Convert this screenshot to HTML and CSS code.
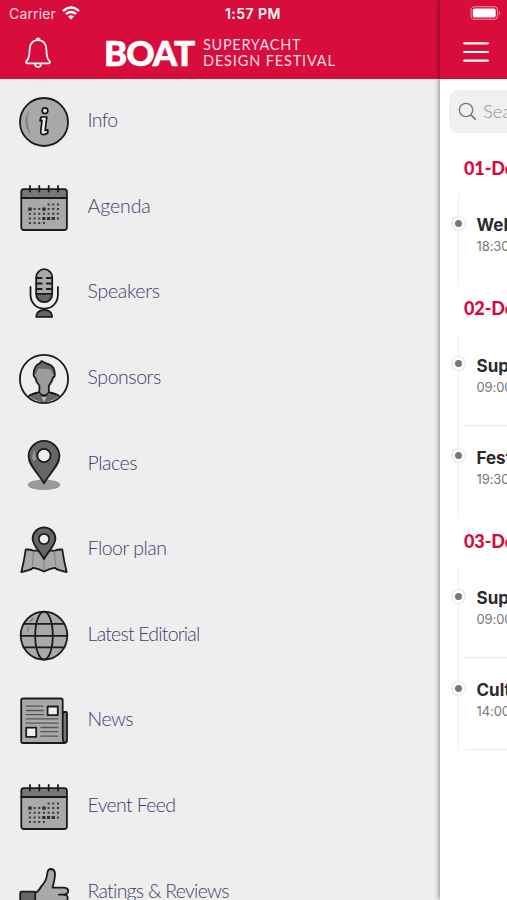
FILE: index.html
```html
<!DOCTYPE html>
<html lang="en">
<head>
<meta charset="utf-8">
<title>BOAT Superyacht Design Festival</title>
<link rel="stylesheet" href="styles.css">
</head>
<body>
<svg class="defs" width="0" height="0">
  <symbol id="calendar" viewBox="0 0 50 50">
    <rect x="2.3" y="6.2" width="45.6" height="40.8" rx="2.5" fill="#a9a9a9"/>
    <path d="M2.3 14.8V8.5q0-2.3 2.3-2.3h41q2.3 0 2.3 2.3v6.3z" fill="#777"/>
    <rect class="ink" x="2.3" y="6.2" width="45.6" height="40.8" rx="2.5"/>
    <path class="ink" d="M2.3 15H48M11 3v5.5M20.3 3v5.5M29.7 3v5.5M39 3v5.5"/>
    <g class="dots"><path d="M28.6 21.4H40.2M9.9 26.1H40.2M9.9 30.8H40.2M9.9 35.4H40.2M9.9 40.1H26.2"/></g>
    <path d="M9.3 24.4h3.4v3.4H9.3zM23.3 24.4h3.4v3.4h-3.4zM23.3 33.9h3.2v3.2h-3.2zM28 33.9h3.2v3.2H28zM32.7 33.9h3.2v3.2h-3.2z" fill="#303030"/>
  </symbol>
</svg>
<div class="app">
  <aside class="drawer">
    <header class="bar">
      <div class="status">
        <span class="carrier">Carrier</span>
        <svg class="wifi" width="18" height="14" viewBox="0 0 18 14"><path d="M1 5.1Q9-2.2 17 5.1M3.9 8.1q5.1-4.3 10.2 0" fill="none" stroke="#fff" stroke-width="2.3"/><path d="M6 10.4q3-2.3 6 0L9 13.6z" fill="#fff"/></svg>
        <span class="clock">1:57 PM</span>
      </div>
      <div class="brand">
        <svg class="bell" width="28" height="32" viewBox="0 0 28 32"><path d="M14 3.2c-5.6 0-8.400 4-8.400 9.300 0 6.600-.8 9.600-3 11.500-1.100 1-.6 2.300.7 2.300h21.400c1.300 0 1.800-1.300.7-2.300-2.200-1.900-3-4.900-3-11.500 0-5.300-2.800-9.300-8.400-9.300zM12.200 3.200c0-2.600 3.600-2.600 3.600 0M11 26.600c0 4.600 6 4.600 6 0" fill="none" stroke="#fff" stroke-width="1.7"/></svg>
        <div class="logo"><span class="logo-name">BOAT</span><span class="logo-tag"><span class="tag-a">SUPERYACHT</span><span class="tag-b">DESIGN FESTIVAL</span></span></div>
      </div>
    </header>
    <nav class="menu">
      <a class="row"><svg class="icon" viewBox="0 0 50 50"><circle class="ink grey" cx="25" cy="25" r="24"/><path d="M10.500 12.500Q6.500 25 12 37.500Q4.500 31 6.600 20Z" fill="#858585"/><circle cx="26" cy="13.700" r="2.800" fill="#eee" stroke="#111" stroke-width="1.700"/><path d="M22 20h5.800l-1.700 13.500 2.600-.8v3.300q-3 2.300-6 1.200-1.300-.8-1-3l1.300-10.800-2 .3z" fill="#eee" stroke="#111" stroke-width="1.700" stroke-linejoin="round"/></svg><span class="w-info">Info</span></a>
      <a class="row"><svg class="icon"><use href="#calendar"/></svg><span class="w-agenda">Agenda</span></a>
      <a class="row"><svg class="icon" viewBox="0 0 50 50"><rect x="17.200" y="1.200" width="16" height="33" rx="8" fill="#a9a9a9"/><path d="M17.200 25.800h16q0 9-8 9t-8-9z" fill="#666"/><rect class="ink" x="17.200" y="1.200" width="16" height="33" rx="8"/><path class="ink" d="M17.200 25.800h16M17.200 10h5.500M17.200 15.500h5.500M17.200 21h5.500M33.200 10h-5.500M33.200 15.500h-5.500M33.200 21h-5.500M11.500 19v7.500c0 18.800 27.400 18.800 27.400 0V19"/><path class="ink dark" d="M17.200 48.800c0-9.300 16-9.300 16 0z"/></svg><span class="w-speakers">Speakers</span></a>
      <a class="row"><svg class="icon" viewBox="0 0 50 50"><path d="M10 42.200q2-2 8.500-3l6.500 3 6.500-3q6.500 1 8.500 3-15 11.500-30 0z" fill="#666"/><path d="M22.500 43h5L25 48z" fill="#bbb"/><path class="ink" d="M10 42q2-2 9.500-3.500M40 42q-2-2-9.500-3.500"/><path d="M20.500 32q-3.500-4-4.300-8.500-2-.8-1.500-4 .2-8 6.300-10.500l1.500-2q4.500 2.300 7.500 3.300 5.500 2 5.800 9.200.3 3.500-1.800 4-1 4.500-4.200 8.500v6.500q-4.800 6-9.600 0z" fill="#9b9b9b"/><path d="M15 20q0-8.500 6-11l1.500-2q4.500 2.300 7.500 3.300 5.500 2 5.500 9.700l-2 .5q0-5-4-5.500l-10-.5q-2 3-2.500 6z" fill="#686868"/><path class="ink" d="M20.500 32q-3.500-4-4.300-8.500-2-.8-1.500-4 .2-8 6.300-10.500l1.500-2q4.500 2.300 7.500 3.300 5.500 2 5.800 9.200.3 3.500-1.800 4-1 4.500-4.200 8.500v6.500q-4.800 6-9.600 0z"/><circle class="ink" cx="25" cy="25" r="24.100"/></svg><span class="w-sponsors">Sponsors</span></a>
      <a class="row"><svg class="icon" viewBox="0 0 50 50"><ellipse cx="25" cy="44.800" rx="16.200" ry="5.200" fill="#999"/><path class="ink dark" d="M25 43.300C19 33 9.600 25 9.600 16.200a15.400 15.400 0 0 1 30.800 0C40.400 25 31 33 25 43.300z"/><path d="M14.500 21q-3-6 1.800-11.500-1 5.500 1 9.500z" fill="#999"/><circle class="ink pale" cx="25" cy="15.500" r="6.600"/></svg><span class="w-places">Places</span></a>
      <a class="row"><svg class="icon" viewBox="0 0 50 50"><path class="ink grey" d="M6.700 24.500q5-.2 7.800 1.300l10.500-1 10.500 1q2.800-1.500 7.800-1.300 1.500 11 4.400 22.500Q39 45.600 35.700 42.800 31 43.500 25 46.500q-6-3-10.700-3.700Q11 45.600 2.300 47 5.200 35.500 6.700 24.500z"/><path d="M14.700 26l-1.500 15M35.300 26l1.500 15M25 33v12" stroke="#777" stroke-width=".8"/><path class="ink dark" d="M25 34C20.800 26 13.600 20.500 13.600 13.800a11.400 11.400 0 0 1 22.800 0C36.400 20.500 29.200 26 25 34z"/><circle class="ink pale" cx="25" cy="14" r="5.200"/></svg><span class="w-floor">Floor plan</span></a>
      <a class="row"><svg class="icon" viewBox="0 0 50 50"><ellipse class="ink grey" cx="25" cy="24.600" rx="23.300" ry="24"/><ellipse class="ink" cx="25" cy="24.600" rx="8.800" ry="24"/><path class="ink" d="M4.700 12.800h40.600M1.700 24.800h46.600M4.500 36.400h41"/><path d="M8.500 21l1-5M11.500 11q1-2.500 3-4" stroke="#777"/></svg><span class="w-editorial">Latest Editorial</span></a>
      <a class="row"><svg class="icon" viewBox="0 0 50 50"><path class="ink mid" d="M43.500 16h3.500q1 0 1 1v27q0 3-3 3h-3z"/><path class="ink grey" d="M4 2.500h38q1.700 0 1.700 1.700V41q0 4 1.500 6H4q-1.800 0-1.800-1.800v-41Q2.200 2.500 4 2.500z"/><path d="M6.700 10.200h18M6.700 14.500h18M6.700 18.600h18M6.700 22.900h32.700M6.700 27.200h32.700M21.400 31.500h18M21.400 35.700h18M21.400 40.100h18" stroke="#555" stroke-width="1.300"/><path class="ink pale" d="M28.600 10.500h10.200v8.700H28.600zM7.200 31.600h10v9.200h-10z"/></svg><span class="w-news">News</span></a>
      <a class="row"><svg class="icon"><use href="#calendar"/></svg><span class="w-feed">Event Feed</span></a>
      <a class="row"><svg class="icon" viewBox="0 0 50 50"><path class="ink grey" d="M16 25q4-2 6.500-7 5-5 5.700-12Q28.500 1 32 1q4.500.5 4 6.500Q35.500 13 33.500 19.700H45q4.500.3 4.200 3.500-.2 3-4.200 3.500 4 .5 3.700 3.800-.4 3.300-4.400 3.300V50H16z"/><path class="ink" d="M40 26.700h6M40 34h5"/><rect class="ink dark" x="1.200" y="23.600" width="15" height="26" rx="1.500"/></svg><span class="w-ratings">Ratings &amp; Reviews</span></a>
    </nav>
  </aside>
  <main class="page">
    <header class="bar page-bar">
      <svg class="battery" width="32" height="14" viewBox="0 0 32 14"><rect x="1" y=".8" width="26.500" height="12.400" rx="3.500" fill="none" stroke="#f08ba4" stroke-width="1.100"/><rect x="2.800" y="2.600" width="22.900" height="8.800" rx="2" fill="#fff"/><path d="M29 4.800q2.200 2.200 0 4.400z" fill="#f08ba4"/></svg>
      <svg class="burger" width="26" height="22" viewBox="0 0 26 22"><path d="M1.200 2.300h23.600M1.200 11h23.600M1.200 19.700h23.600" stroke="#fff" stroke-width="2.200" stroke-linecap="round"/></svg>
    </header>
    <div class="search"><svg width="20" height="20" viewBox="0 0 20 20"><circle cx="8" cy="8" r="6.700" fill="none" stroke="#777" stroke-width="1.300"/><path d="M12.700 12.700l5 5" stroke="#777" stroke-width="1.800"/></svg><span>Search</span></div>
    <section>
      <h2>01-Dec-2021</h2>
      <article><i class="dot"></i><div class="event"><h3>Welcome Drinks</h3><time>18:30 - 20:30</time></div></article>
    </section>
    <section>
      <h2>02-Dec-2021</h2>
      <article><i class="dot"></i><div class="event ruled"><h3>Superyacht Design</h3><time>09:00 - 17:00</time></div></article>
      <article><i class="dot"></i><div class="event"><h3>Festival Dinner</h3><time>19:30 - 23:00</time></div></article>
    </section>
    <section>
      <h2>03-Dec-2021</h2>
      <article><i class="dot"></i><div class="event ruled"><h3>Superyacht Design</h3><time>09:00 - 13:00</time></div></article>
      <article><i class="dot"></i><div class="event ruled"><h3>Cultural Tour</h3><time>14:00 - 17:00</time></div></article>
    </section>
  </main>
</div>
</body>
</html>
```
FILE: styles.css
```css
* { box-sizing: border-box; }
body { margin: 0; overflow: hidden; background: #fff; font-family: Lato, sans-serif; }
.defs { position: absolute; }
.app { display: flex; width: 507px; height: 900px; overflow: hidden; }
.drawer { flex: 0 0 440px; background: #eee; overflow: hidden; }
.bar { height: 79px; background: #d80d3c; color: #fff; }
.status { display: flex; align-items: center; height: 27px; padding-left: 9px; font-family: Inter, sans-serif; font-size: 14px; }
.carrier { width: 48px; color: #fbdde4; letter-spacing: .15px; }
.wifi { margin: -1px 0 0 5px; }
.clock { margin-left: 145px; font-size: 14px; font-weight: 600; letter-spacing: .45px; white-space: nowrap; }
.brand { display: flex; height: 52px; padding: 10px 0 0 24px; }
.logo { display: flex; margin-left: 52px; white-space: nowrap; }
.logo-name { width: 99px; font-size: 35px; font-weight: 900; line-height: 31px; letter-spacing: -1px; -webkit-text-stroke: .6px #fff; }
.logo-tag { display: flex; flex-direction: column; font-size: 14.5px; line-height: 15.5px; color: #fbdde4; }
.tag-a { letter-spacing: .7px; }
.tag-b { letter-spacing: .85px; }
.row { display: flex; align-items: center; height: 85.6px; padding-left: 19.3px; color: #433d70; font-size: 19.5px; font-weight: 300; white-space: nowrap; }
.row span { margin: -4px 0 0 18.3px; }
.w-info { letter-spacing: -.7px; }
.w-agenda { letter-spacing: -.1px; }
.w-speakers { letter-spacing: -.3px; }
.w-sponsors { letter-spacing: -.45px; }
.w-places { letter-spacing: -.5px; }
.w-floor { letter-spacing: -.5px; }
.w-editorial { letter-spacing: -.8px; }
.w-news { letter-spacing: -.6px; }
.w-feed { letter-spacing: -.65px; }
.w-ratings { letter-spacing: -.75px; }
.icon { width: 50px; height: 50px; flex: none; margin-top: 1px; overflow: visible; }
.ink { fill: none; stroke: #1b1b1b; stroke-width: 1.8; stroke-linejoin: round; stroke-linecap: round; }
.grey { fill: #a9a9a9; }
.mid { fill: #777; }
.dark { fill: #666; }
.pale { fill: #eee; }
.dots path { stroke: #383838; stroke-width: 2; stroke-dasharray: 2 2.67; }
.page { flex: 0 0 67px; overflow: hidden; background: #fff; box-shadow: -1px 0 5px rgba(0, 0, 0, .42); z-index: 1; }
.page-bar { display: flex; flex-direction: column; }
.battery { margin: 6px 0 0 30px; }
.burger { margin: 21px 0 0 23px; }
.search { display: flex; align-items: center; gap: 5px; width: 300px; height: 43px; margin: 11px 0 11.5px 9px; padding-left: 9px; border-radius: 10px; background: #f0f0f0; color: #909090; font-size: 18.5px; font-weight: 300; }
.search span { margin-top: -1px; }
h2 { height: 48.5px; margin: 0 0 0 24px; color: #d40b40; font-size: 18px; font-weight: 900; line-height: 46px; letter-spacing: -.1px; white-space: nowrap; }
article { display: flex; height: 92px; margin-left: 17.5px; border-left: 1px solid #f0f0f0; }
.dot { flex: none; width: 13px; height: 13px; margin: 23.500px 0 0 -7px; border: 3px solid #fff; border-radius: 50%; background: #777; box-shadow: 0 0 0 1px #e4e4e4; }
.event { flex: none; width: 200px; padding: 21px 0 0 12px; font-family: Inter, sans-serif; white-space: nowrap; }
.ruled { background: linear-gradient(#e9e9e9, #e9e9e9) 0 100% / 100% 1px no-repeat; }
h3 { margin: 0; color: #2b2b2b; font-size: 17px; font-weight: 700; line-height: 22px; }
time { display: block; color: #777; font-size: 13px; line-height: 21px; letter-spacing: -.1px; }
```
